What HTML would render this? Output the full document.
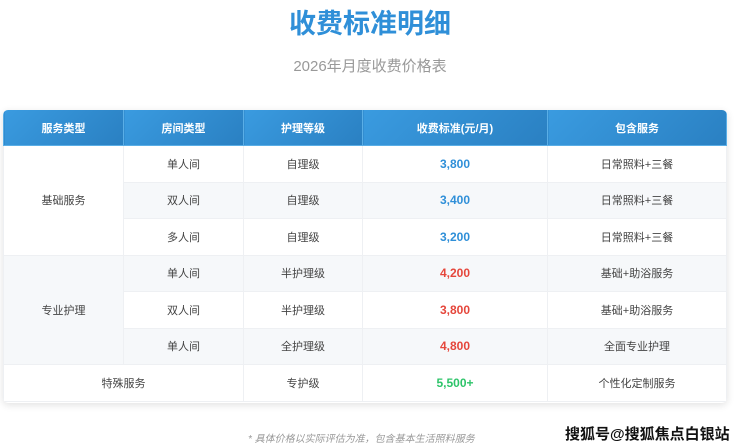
<!DOCTYPE html>
<html><head><meta charset="utf-8"><style>
body{margin:0;width:740px;height:447px;background:#fff;font-family:"Liberation Sans","Noto Sans CJK SC",sans-serif;position:relative;overflow:hidden}
.t{position:absolute;top:6px;left:0;width:740px;text-align:center;font-size:27px;font-weight:bold;color:#2f8fd8;line-height:36px}
.s{position:absolute;top:56px;left:0;width:740px;text-align:center;font-size:15px;color:#999;line-height:22px}
.tb{position:absolute;left:3px;top:110px;width:724px;height:293px;border-radius:5px;box-shadow:0 2px 8px rgba(0,0,0,.12);overflow:hidden}
table{border-collapse:collapse;width:724px;font-size:11px;color:#444;table-layout:fixed}
td,th{text-align:center;padding:0;border:1px solid #eef0f3}
th{background:linear-gradient(135deg,#3a9be0,#2a80c2);color:#fff;height:35px;font-size:11px;border-color:#5aaee6;border-top:0}
td{height:35.5px}
.g{background:#f6f8fa}
.b{color:#2f8fd8;font-weight:bold;font-size:12px}.r{color:#e5463b;font-weight:bold;font-size:12px}.gr{color:#2ec46a;font-weight:bold;font-size:12px}
.f{position:absolute;top:430px;left:248px;font-size:10px;color:#999;font-style:italic}
.w{position:absolute;top:423px;left:565px;font-size:15px;font-weight:bold;color:#111;text-shadow:0 0 2px #fff,0 0 2px #fff}
</style></head><body>
<div class="t">收费标准明细</div>
<div class="s">2026年月度收费价格表</div>
<div class="tb"><table>
<tr><th style="width:119px">服务类型</th><th style="width:119px">房间类型</th><th style="width:118px">护理等级</th><th style="width:184px">收费标准(元/月)</th><th>包含服务</th></tr>
<tr><td rowspan="3">基础服务</td><td>单人间</td><td>自理级</td><td class="b">3,800</td><td>日常照料+三餐</td></tr>
<tr class="g"><td>双人间</td><td>自理级</td><td class="b">3,400</td><td>日常照料+三餐</td></tr>
<tr><td>多人间</td><td>自理级</td><td class="b">3,200</td><td>日常照料+三餐</td></tr>
<tr class="g"><td rowspan="3" class="g">专业护理</td><td>单人间</td><td>半护理级</td><td class="r">4,200</td><td>基础+助浴服务</td></tr>
<tr><td>双人间</td><td>半护理级</td><td class="r">3,800</td><td>基础+助浴服务</td></tr>
<tr class="g"><td>单人间</td><td>全护理级</td><td class="r">4,800</td><td>全面专业护理</td></tr>
<tr><td colspan="2">特殊服务</td><td>专护级</td><td class="gr">5,500+</td><td>个性化定制服务</td></tr>
</table></div>
<div class="f">* 具体价格以实际评估为准，包含基本生活照料服务</div>
<div class="w">搜狐号@搜狐焦点白银站</div>
</body></html>
